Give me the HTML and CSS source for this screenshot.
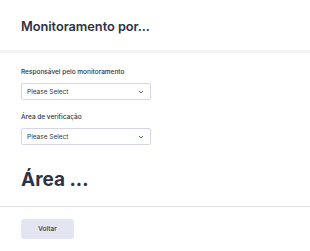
FILE: index.html
```html
<!DOCTYPE html>
<html lang="pt">
<head>
<meta charset="utf-8">
<link rel="stylesheet" href="styles.css">
</head>
<body>
<div class="page">
  <header class="head">
    <h1 class="title">Monitoramento por...</h1>
  </header>
  <section class="fields">
    <div class="field">
      <label class="label">Responsável pelo monitoramento</label>
      <div class="select"><span>Please Select</span>
        <svg class="chev" width="6" height="4" viewBox="0 0 6 4"><path d="M1 1l2 2 2-2" fill="none" stroke="#57647e" stroke-width="1"/></svg>
      </div>
    </div>
    <div class="field">
      <label class="label">Área de verificação</label>
      <div class="select"><span>Please Select</span>
        <svg class="chev" width="6" height="4" viewBox="0 0 6 4"><path d="M1 1l2 2 2-2" fill="none" stroke="#57647e" stroke-width="1"/></svg>
      </div>
    </div>
  </section>
  <section class="section2">
    <h2 class="subtitle">Área ...</h2>
  </section>
  <footer class="foot">
    <button class="btn">Voltar</button>
  </footer>
</div>
</body>
</html>
```
FILE: styles.css
```css
* { box-sizing: border-box; }
html, body { margin: 0; padding: 0; background: #fff; }
body { font-family: Inter, "Noto Sans", sans-serif; color: #2c3345; }
.page { width: 310px; }
.head { padding: 18px 21px 0; height: 53px; border-bottom: 3px solid #f3f3f5; }
.title { margin: 0; font-size: 12.8px; font-weight: 600; line-height: 18px; letter-spacing: -0.05px; }
.fields { padding: 15px 21px 0; }
.field + .field { margin-top: 13px; }
.label { display: block; font-size: 6.5px; font-weight: 500; line-height: 9px; margin-bottom: 6px; color: #2c3345; }
.select { width: 130px; height: 17px; border: 1px solid #d5d8e4; border-radius: 2px; display: flex; align-items: center; justify-content: space-between; padding: 0 6px 0 5px; font-size: 6.5px; color: #2c3345; }
.chev { display: block; }
.section2 { padding: 25px 21px 0; height: 62px; border-bottom: 1px solid #e3e2ec; }
.subtitle { margin: 0; font-size: 19px; font-weight: 700; line-height: 20px; }
.foot { padding: 12px 21px; }
.btn { display: block; width: 53px; height: 20px; border: 0; border-radius: 3px; background: #e3e5f2; font-family: Inter, sans-serif; font-size: 6.5px; font-weight: 500; color: #2c3345; padding: 0; }
```
